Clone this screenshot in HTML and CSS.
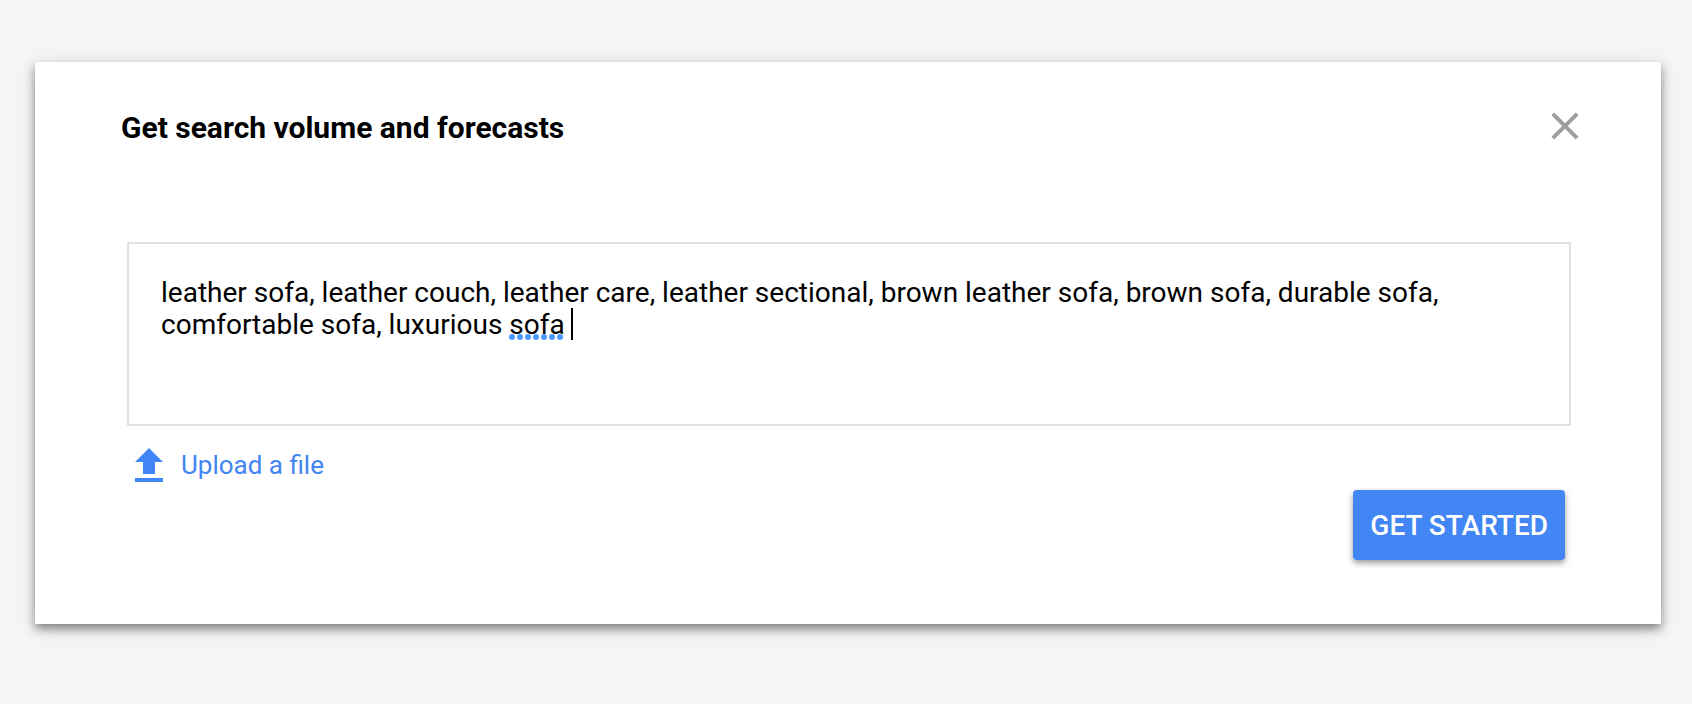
FILE: index.html
```html
<!DOCTYPE html>
<html lang="en">
<head>
  <meta charset="utf-8">
  <title>Get search volume and forecasts</title>
  <link rel="stylesheet" href="styles.css">
</head>
<body>
  <main class="card">
    <header class="card-header">
      <h1 class="card-title" id="card-title">Get search volume and forecasts</h1>
      <button class="close-button" type="button" aria-label="Close">
        <svg class="close-icon" viewBox="0 0 28 28" aria-hidden="true">
          <path d="M1.8 1.8L26.2 26.2M26.2 1.8L1.8 26.2" />
        </svg>
      </button>
    </header>
    <form class="keyword-form">
      <div class="keyword-field">
        <textarea class="keyword-input" aria-labelledby="card-title" spellcheck="false">leather sofa, leather couch, leather care, leather sectional, brown leather sofa, brown sofa, durable sofa, comfortable sofa, luxurious sofa </textarea>
        <svg class="spelling-mark" viewBox="0 0 54 6" aria-hidden="true">
          <circle cx="3" cy="3" r="3" /><circle cx="11" cy="3" r="3" /><circle cx="19" cy="3" r="3" /><circle cx="27" cy="3" r="3" /><circle cx="35" cy="3" r="3" /><circle cx="43" cy="3" r="3" /><circle cx="51" cy="3" r="3" />
        </svg>
        <span class="caret"></span>
      </div>
      <button class="upload-button" type="button">
        <svg class="upload-icon" viewBox="0 0 28 34" aria-hidden="true">
          <path d="M14 0L28 14H20V26H8V14H0ZM0 30H28V34H0Z" />
        </svg>
        Upload a file
      </button>
      <button class="start-button" type="button">GET STARTED</button>
    </form>
  </main>
</body>
</html>
```
FILE: styles.css
```css
* {
  box-sizing: border-box;
}

body {
  margin: 0;
  padding: 62px 31px 64px 35px;
  background: #f5f5f5;
  color: #000;
  font-family: Roboto, "Liberation Sans", sans-serif;
}

button {
  margin: 0;
  border: 0;
  font-family: inherit;
  cursor: pointer;
}

.card {
  padding: 48px 80px 64px 86px;
  background: #fff;
  box-shadow: 0 5px 9px rgba(0, 0, 0, 0.42), 0 4px 20px rgba(0, 0, 0, 0.1);
}

.card-header {
  display: flex;
  align-items: flex-start;
  justify-content: space-between;
}

.card-title {
  margin: 0;
  font-size: 30px;
  font-weight: 700;
  line-height: 36px;
}

.close-button {
  padding: 2px 2px 0 0;
  background: none;
}

.close-icon {
  display: block;
  width: 28px;
  height: 28px;
  fill: none;
  stroke: #9e9e9e;
  stroke-width: 4;
}

.keyword-form {
  display: flex;
  flex-direction: column;
  align-items: flex-start;
  padding: 96px 10px 0 6px;
}

.keyword-field {
  position: relative;
  align-self: stretch;
}

.keyword-input {
  display: block;
  width: 100%;
  height: 184px;
  padding: 33px 32px;
  border: 2px solid #e0e0e0;
  border-radius: 0;
  outline: 0;
  background: #fff;
  color: #000;
  font-family: inherit;
  font-size: 28px;
  line-height: 32px;
  resize: none;
  overflow: hidden;
}

.spelling-mark {
  position: absolute;
  left: 382px;
  top: 92px;
  width: 54px;
  height: 6px;
  fill: #4a9bff;
}

.caret {
  position: absolute;
  left: 444px;
  top: 66px;
  width: 2px;
  height: 32px;
  background: #000;
}

.upload-button {
  display: flex;
  align-items: center;
  gap: 18px;
  margin-top: 22px;
  padding: 0 8px;
  background: none;
  color: #4285f4;
  font-size: 26px;
  line-height: 34px;
}

.upload-icon {
  width: 28px;
  height: 34px;
  fill: #4285f4;
}

.start-button {
  align-self: flex-end;
  margin: 8px 6px 0 0;
  padding: 19px 17px 17px;
  border-radius: 4px;
  background: #4285f4;
  box-shadow: 0 3px 6px rgba(0, 0, 0, 0.4);
  color: #fff;
  font-size: 28px;
  font-weight: 500;
  line-height: 34px;
}
```
